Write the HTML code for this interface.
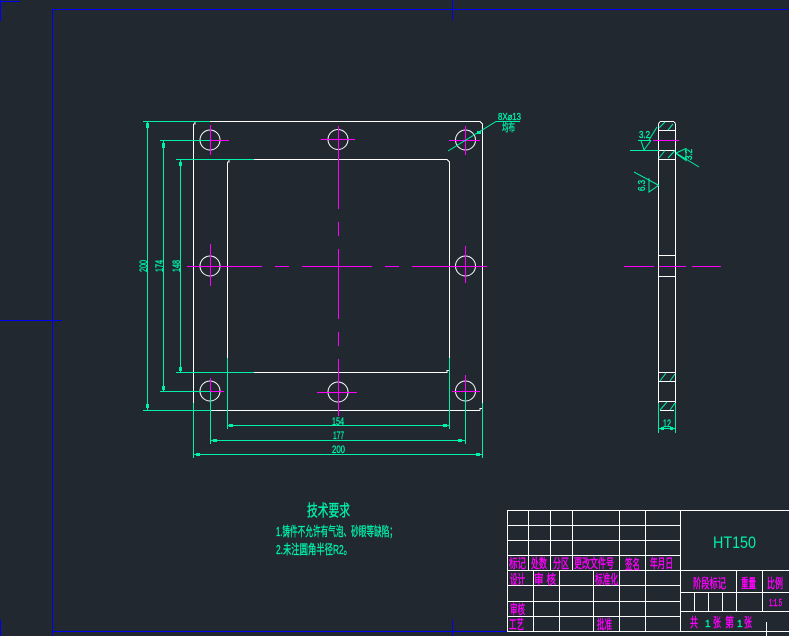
<!DOCTYPE html>
<html><head><meta charset="utf-8"><style>
html,body{margin:0;padding:0;background:#212830;width:789px;height:636px;overflow:hidden}
svg{display:block}
text{font-family:"Liberation Sans","Noto Sans CJK SC",sans-serif}
.w{stroke:#fff;fill:none;stroke-width:1}
.t{stroke:#00f0aa;fill:none;stroke-width:1}
.m{stroke:#f0f;fill:none;stroke-width:1}
.b{stroke:#0000f0;fill:none;stroke-width:1}
.tt{fill:#00f0aa}
text.tt{stroke:#00f0aa;stroke-width:.35}
text.thin{stroke:none}
.mt{fill:#f0f;font-size:13px;stroke:#f0f;stroke-width:.4}
</style></head><body>
<svg width="789" height="636" viewBox="0 0 789 636" xmlns="http://www.w3.org/2000/svg" shape-rendering="crispEdges">
<path class="b" d="M0 1.500H20M.5 0V21M52.500 636V9.500H789M452.500 0V20M0 320.500H62M.5 620V636M52.500 631.500H507M452.500 620V636"/>
<g stroke-width="1">
<path class="w" d="M210 121.500H480L482.500 124V403M193.500 124V403M193.500 124H195V121.500M196 410.500H480M480 410.500V408.500H482M254 159.500H447L449.500 162V358M227.500 162V358M227.500 162H229V159.500M254 372.500H447V370.500H449"/>
<g class="w" shape-rendering="auto">
<circle cx="210" cy="140" r="10"/><circle cx="338" cy="139.500" r="10"/><circle cx="465.500" cy="140" r="10"/>
<circle cx="210" cy="266" r="10"/><circle cx="465.500" cy="266" r="10"/>
<circle cx="210" cy="391" r="10"/><circle cx="338" cy="392" r="10"/><circle cx="465.500" cy="391" r="10"/>
</g>
<path class="t" d="M143 121.500H210M160 140.500H210M176 159.500H254M176 372.500H254M160 391.500H210M143 410.500H210M147.500 121V410M163.500 140V391M180.500 159V372M193.500 403V458M210.500 391V444M227.500 358V429M449.500 358V429M465.500 391V444M482.500 403V458M227 425.500H449M210 440.500H465M193 454.500H482"/>
<path class="tt" d="M146 123h3v5h-3zM146 404h3v4h-3zM162 143h3v5h-3zM162 386h3v4h-3zM179 162h3v4h-3zM179 367h3v4h-3zM229 424h4v3h-4zM443 424h4v3h-4zM213 439h4v3h-4zM458 439h4v3h-4zM196 453h4v3h-4zM476 453h4v3h-4z"/>
<path class="m" d="M187 266.500H262M275 266.500H289M302 266.500H372M385 266.500H399M412 266.500H487M338.500 126V209M338.500 222V236M338.500 249V319M338.500 332V346M338.500 359V416M210.500 244V286M465.500 246V283M321 139.500H355M317 392.500H357M210 140.500H229M210.500 125V155M449 140.500H480M465.500 126V155M210 391.500H224M210.500 378V391M452 391.500H480M465.500 375V391"/>
<path class="t" shape-rendering="auto" d="M448 151L496 121.500H520"/>
<path class="tt" d="M477 131h4v3h-4z"/>
<text class="tt" font-size="10" x="498" y="120" textLength="23" lengthAdjust="spacingAndGlyphs">8X⌀13</text>
<text class="tt" font-size="11" x="502" y="131" textLength="13" lengthAdjust="spacingAndGlyphs">均布</text>
<text class="tt" font-size="11" transform="translate(147,272) rotate(-90)" textLength="12" lengthAdjust="spacingAndGlyphs">200</text>
<text class="tt" font-size="11" transform="translate(163,272) rotate(-90)" textLength="12" lengthAdjust="spacingAndGlyphs">174</text>
<text class="tt" font-size="11" transform="translate(180,272) rotate(-90)" textLength="12" lengthAdjust="spacingAndGlyphs">148</text>
<text class="tt" font-size="11" x="332" y="425" textLength="12" lengthAdjust="spacingAndGlyphs">154</text>
<text class="tt" font-size="11" x="333" y="439" textLength="11" lengthAdjust="spacingAndGlyphs">177</text>
<text class="tt" font-size="11" x="332" y="453" textLength="13" lengthAdjust="spacingAndGlyphs">200</text>
<!-- side view -->
<path class="w" d="M658.500 124V430M675.500 124V430M660 121.500H674M658.500 124L660 121.500M675.500 124L674 121.500M659 130.500H675M659 150.500H675M659 159.500H675M659 255.500H675M659 276.500H675M659 372.500H675M659 381.500H675M659 401.500H675M660 410.500H674"/>
<path class="m" d="M653 140.500H679M624 266.500H654M659 266.500H686M692 266.500H721"/>
<path class="t" d="M658.500 403V433M675.500 403V433M659 428.500H675"/>
<path class="tt" d="M661 427h3v3h-3zM670 427h3v3h-3z"/>
<text class="tt" font-size="11" x="663" y="427" textLength="8" lengthAdjust="spacingAndGlyphs">12</text>
<g shape-rendering="auto">
<path class="t" d="M659 128L665 122M668 130L673 124M659 158L665 150.500M668 158L675 150.500M660 381L666 373M670 381L675 374M660 410L667 402M670 410L675 403"/>
<path class="t" d="M630 150.500H659M638 140.500H651M641 140.500L644 150M651 140.500L644 150M649 140L657 127M676 153L686 148.500V160.500L676 153.500M676 153L699 167M634 172L659 185.500M649 178V192L659 185"/>
</g>
<text class="tt" font-size="10" x="639" y="138" textLength="11" lengthAdjust="spacingAndGlyphs">3.2</text>
<text class="tt" font-size="10" transform="translate(692,160) rotate(-90)" textLength="11" lengthAdjust="spacingAndGlyphs">3.2</text>
<text class="tt" font-size="10" transform="translate(645,191) rotate(-90)" textLength="11" lengthAdjust="spacingAndGlyphs">6.3</text>
<!-- tech text -->
<text class="tt" font-size="16" x="307" y="516" textLength="43" lengthAdjust="spacingAndGlyphs">技术要求</text>
<text class="tt" font-size="13" x="276" y="536" textLength="121" lengthAdjust="spacingAndGlyphs">1.铸件不允许有气泡、砂眼等缺陷；</text>
<text class="tt" font-size="13" x="276" y="554" textLength="76" lengthAdjust="spacingAndGlyphs">2.未注圆角半径R2。</text>
<!-- title block -->
<path class="w" d="M507.500 510.500H789M507.500 525.500H680M507.500 540.500H680M507.500 555.500H680M507.500 570.500H789M507.500 585.500H680M507.500 601.500H680M507.500 616.500H680M507.500 631.500H789M680 592.500H789M680 611.500H789M507.500 510V632M528.500 510V570M550.500 510V570M572.500 510V570M619.500 510V632M645.500 510V632M680.500 510V632M533.500 570V632M559.500 570V632M593.500 570V632M736.500 570V611M762.500 570V611M694.500 592V611M708.500 592V611M722.500 592V611M766.500 622V636"/>
<text class="tt thin" font-size="17" x="713" y="548" textLength="43" lengthAdjust="spacingAndGlyphs">HT150</text>
<text class="mt" x="509" y="568" textLength="17" lengthAdjust="spacingAndGlyphs">标记</text>
<text class="mt" x="531" y="568" textLength="16" lengthAdjust="spacingAndGlyphs">处数</text>
<text class="mt" x="553" y="568" textLength="16" lengthAdjust="spacingAndGlyphs">分区</text>
<text class="mt" x="574" y="568" textLength="40" lengthAdjust="spacingAndGlyphs">更改文件号</text>
<text class="mt" x="625" y="569" textLength="15" lengthAdjust="spacingAndGlyphs">签名</text>
<text class="mt" x="650" y="568" textLength="23" lengthAdjust="spacingAndGlyphs">年月日</text>
<text class="mt" x="510" y="584" textLength="15" lengthAdjust="spacingAndGlyphs">设计</text>
<text class="mt" x="534" y="584" textLength="22" lengthAdjust="spacingAndGlyphs">审 核</text>
<text class="mt" x="595" y="584" textLength="23" lengthAdjust="spacingAndGlyphs">标准化</text>
<text class="mt" x="510" y="614" textLength="15" lengthAdjust="spacingAndGlyphs">审核</text>
<text class="mt" x="509" y="629" textLength="15" lengthAdjust="spacingAndGlyphs">工艺</text>
<text class="mt" x="597" y="629" textLength="15" lengthAdjust="spacingAndGlyphs">批准</text>
<text class="mt" x="693" y="588" textLength="33" lengthAdjust="spacingAndGlyphs">阶段标记</text>
<text class="mt" x="741" y="588" textLength="15" lengthAdjust="spacingAndGlyphs">重量</text>
<text class="mt" x="767" y="588" textLength="16" lengthAdjust="spacingAndGlyphs">比例</text>
<text class="mt" x="769" y="606" style="font-size:10px" textLength="13" lengthAdjust="spacingAndGlyphs">1:1.5</text>
<text class="mt" x="690" y="627" textLength="8" lengthAdjust="spacingAndGlyphs">共</text>
<text class="tt" font-size="10" x="705" y="627">1</text>
<text class="mt" x="713" y="627" textLength="8" lengthAdjust="spacingAndGlyphs">张</text>
<text class="mt" x="725" y="627" textLength="9" lengthAdjust="spacingAndGlyphs">第</text>
<text class="tt" font-size="10" x="737" y="627">1</text>
<text class="mt" x="744" y="627" textLength="8" lengthAdjust="spacingAndGlyphs">张</text>
</g>
</svg>
</body></html>
